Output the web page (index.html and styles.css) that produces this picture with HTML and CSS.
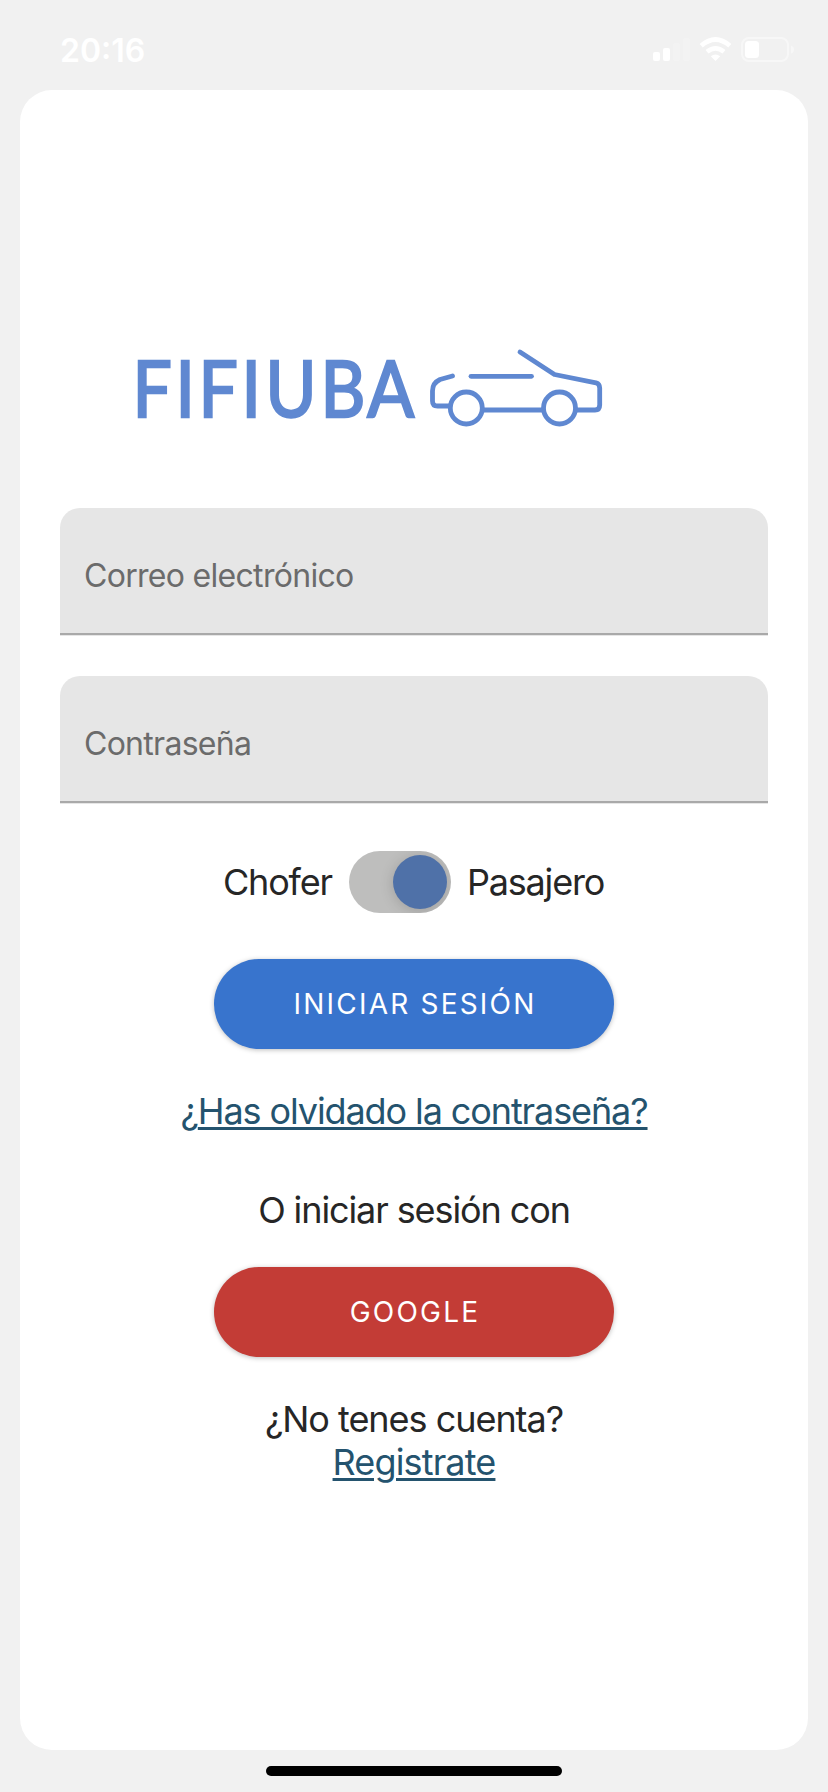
FILE: index.html
```html
<!DOCTYPE html>
<html lang="es">
<head>
<meta charset="utf-8">
<title>FIFIUBA</title>
<link rel="stylesheet" href="styles.css">
</head>
<body>
<header class="status">
  <span class="time">20:16</span>
  <svg class="status-icons" width="142" height="28" viewBox="652 36 142 28" fill="#fff">
    <rect x="653" y="52" width="7" height="9" rx="2"/>
    <rect x="663" y="48" width="7" height="13" rx="2"/>
    <rect x="673" y="43" width="7" height="18" rx="2" opacity=".2"/>
    <rect x="683" y="38" width="7" height="23" rx="2" opacity=".2"/>
    <path d="M715.5 61 L710.8 56.3 Q715.5 52.8 720.2 56.3 Z"/>
    <path d="M707 51.8 Q715.5 44.8 724 51.8" fill="none" stroke="#fff" stroke-width="4.6"/>
    <path d="M701.2 45.8 Q715.5 33.4 729.8 45.8" fill="none" stroke="#fff" stroke-width="4.8"/>
    <rect x="742" y="38" width="46" height="23" rx="7" fill="none" stroke="#fff" stroke-width="2" opacity=".45"/>
    <rect x="745" y="41" width="14" height="17" rx="3.5"/>
    <path d="M791 45.5 Q794 46.500 794 49.500 T791 53.500 Z" opacity=".45"/>
  </svg>
</header>
<main class="card">
  <svg class="logo" width="480" height="105" viewBox="130 330 480 105">
    <text class="wordmark" transform="scale(.9 1)" y="416.800" x="147.200 195 220.500 268.200 295 356 408.200">FIFIUBA</text>
    <g class="car">
      <path d="M452.500 376 L440 379.500 Q432.500 383 432.500 391 V401 Q432.500 406 437.500 406 H449"/>
      <path d="M471 376.300 H531.500"/>
      <path d="M520 352 L554.500 374.500 L596 382.800 Q599.700 384 599.700 388 V405 Q599.700 410 595 410 H577"/>
      <path d="M484 410 H542"/>
      <circle cx="466.300" cy="408" r="16"/>
      <circle cx="559.500" cy="408" r="16"/>
    </g>
  </svg>
  <div class="field"><span class="label-mail">Correo electrónico</span></div>
  <div class="field"><span class="label-pass">Contraseña</span></div>
  <div class="role">
    <span class="driver">Chofer</span>
    <span class="switch"><span class="knob"></span></span>
    <span class="rider">Pasajero</span>
  </div>
  <button class="btn login">INICIAR SESIÓN</button>
  <a class="forgot">¿<span class="under">Has olvidado la contraseña?</span></a>
  <p class="or">O iniciar sesión con</p>
  <button class="btn google">GOOGLE</button>
  <p class="account">¿No tenes cuenta?</p>
  <a class="register under">Registrate</a>
</main>
<div class="home"></div>
</body>
</html>
```
FILE: styles.css
```css
* { box-sizing: border-box; }
body {
  margin: 0;
  width: 828px;
  height: 1792px;
  background: #f1f1f1;
  font-family: Inter, "Liberation Sans", sans-serif;
  font-size: 36px;
  line-height: 44px;
  color: #262626;
  display: flex;
  flex-direction: column;
  align-items: center;
  overflow: hidden;
}
.status {
  width: 100%;
  height: 90px;
  padding: 28px 34px 0 60px;
  display: flex;
  justify-content: space-between;
  align-items: flex-start;
  color: #fff;
}
.time { margin-top: 1px; font-size: 32px; font-weight: 600; }
.status-icons { margin-top: 8px; }
.card {
  width: 788px;
  height: 1660px;
  padding: 240px 40px 0;
  border-radius: 32px;
  background: #fff;
  display: flex;
  flex-direction: column;
  align-items: center;
}
.logo { align-self: flex-start; margin: 0 0 73px 70px; flex: none; }
.wordmark {
  font-family: Lato, sans-serif;
  font-size: 77px;
  fill: #5f88d1;
  stroke: #5f88d1;
  stroke-width: 2.4px;
}
.car {
  fill: none;
  stroke: #5f88d1;
  stroke-width: 4.8px;
  stroke-linecap: round;
  stroke-linejoin: round;
}
.field {
  width: 708px;
  height: 128px;
  padding: 46px 24px 0;
  margin-bottom: 40px;
  border-radius: 20px 20px 0 0;
  background: linear-gradient(#a9a9a9, #a9a9a9) 0 125px / 100% 2px no-repeat #e6e6e6;
  font-size: 32px;
  color: #6b6b6b;
}
.label-mail { letter-spacing: -.7px; }
.label-pass { letter-spacing: -.72px; }
.role {
  width: 100%;
  height: 62px;
  margin: 7px 0 46px;
  padding-left: 163px;
  display: flex;
  align-items: center;
}
.driver, .rider { width: 109px; letter-spacing: -1.2px; }
.switch {
  width: 102px;
  height: 62px;
  margin: 0 16px 0 17px;
  padding: 4px;
  border-radius: 31px;
  background: #bebebd;
  display: flex;
  justify-content: flex-end;
  overflow: hidden;
}
.knob {
  width: 54px;
  height: 54px;
  border-radius: 50%;
  background: #4f71a8;
  box-shadow: 0 2px 14px rgba(0, 0, 0, .17);
}
.btn {
  width: 400px;
  height: 90px;
  flex: none;
  padding: 0 0 0 2px;
  border: 0;
  border-radius: 45px;
  color: #fff;
  font-family: inherit;
  font-size: 28px;
  font-weight: 400;
  letter-spacing: 2.2px;
  box-shadow: 0 1px 5px rgba(0, 0, 0, .26);
}
.login { background: #3874cd; }
.google { background: #c33c36; }
.forgot { margin: 40px 0 55px; color: #24536e; letter-spacing: -1.1px; }
.under {
  text-decoration: underline;
  text-decoration-thickness: 3px;
  text-underline-offset: 3px;
}
.or { margin: 0 0 35px; letter-spacing: -1.1px; }
.account { margin: 41px 0 0; line-height: 43px; letter-spacing: -1.03px; }
.register { color: #24536e; line-height: 43px; letter-spacing: -.85px; }
.home { width: 296px; height: 10px; margin-top: 16px; border-radius: 5px; background: #000; }
```
